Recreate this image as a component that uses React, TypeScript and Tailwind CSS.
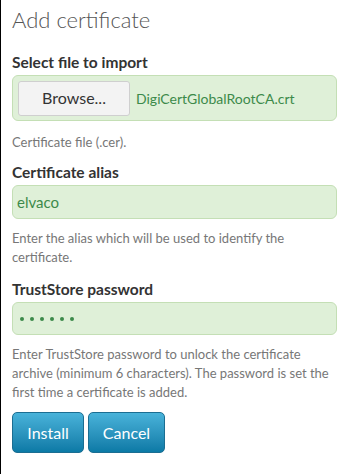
/**
 * Add certificate form
 */

export default function App() {
  const font = { fontFamily: "Lato, 'Open Sans', sans-serif" };
  return (
    <div className="w-[347px] h-[474px] bg-white border-l border-black overflow-hidden" style={font}>
      <div className="pl-[11px] pr-[10px]">
        <h1 className="pt-[5px] text-[22px] leading-[30px] font-light text-[#555]">Add certificate</h1>

        {/* File */}
        <label className="block mt-[17px] text-[15.5px] leading-[20px] font-bold text-[#333]">Select file to import</label>
        <div className="mt-[3px] h-[46px] flex items-center gap-[6px] px-[5px] rounded-[6px] bg-[#dff0d8] border border-[#c4dfb5]">
          <button className="h-[35px] w-[112px] rounded-[3px] bg-[#f3f3f3] border border-[#cfcfcf] text-[16px] text-[#333]">
            Browse...
          </button>
          <span className="text-[14px] text-[#3c8a4a]">DigiCertGlobalRootCA.crt</span>
        </div>
        <p className="mt-[12px] text-[13px] leading-[18px] text-[#777]">Certificate file (.cer).</p>

        {/* Alias */}
        <label className="block mt-[11px] text-[15.5px] leading-[20px] font-bold text-[#333]">Certificate alias</label>
        <div className="mt-[3px] h-[34px] flex items-center px-[4px] rounded-[6px] bg-[#dff0d8] border border-[#c4dfb5] text-[15px] text-[#3c8a4a]">
          elvaco
        </div>
        <p className="mt-[10px] text-[13px] leading-[19px] text-[#777]">
          Enter the alias which will be used to identify the certificate.
        </p>

        {/* Password */}
        <label className="block mt-[12px] text-[15.5px] leading-[20px] font-bold text-[#333]">TrustStore password</label>
        <div className="mt-[3px] h-[33px] flex items-center gap-[6px] px-[7px] rounded-[6px] bg-[#dff0d8] border border-[#c4dfb5]">
          {[0, 1, 2, 3, 4, 5].map((i) => (
            <span key={i} className="w-[4px] h-[4px] rounded-full bg-[#3c8a4a]" />
          ))}
        </div>
        <p className="mt-[10px] text-[13px] leading-[19px] text-[#777]">
          Enter TrustStore password to unlock the certificate archive (minimum 6 characters). The password is set the first time a certificate is added.
        </p>

        {/* Actions */}
        <div className="mt-[10px] flex gap-[4px]">
          <button className="h-[41px] w-[72px] rounded-[5px] border border-[#1b6e92] bg-gradient-to-b from-[#48b3da] to-[#0b7aa6] text-[16px] text-white">
            Install
          </button>
          <button className="h-[41px] w-[77px] rounded-[5px] border border-[#1b6e92] bg-gradient-to-b from-[#48b3da] to-[#0b7aa6] text-[16px] text-white">
            Cancel
          </button>
        </div>
      </div>
    </div>
  );
}
